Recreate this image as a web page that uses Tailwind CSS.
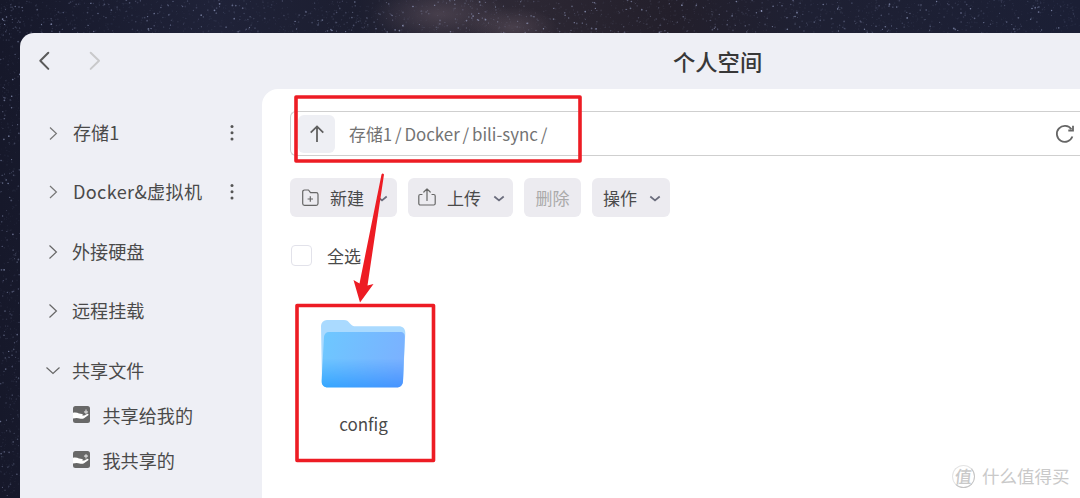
<!DOCTYPE html>
<html lang="zh-CN">
<head>
  <meta charset="UTF-8">
  <title>个人空间</title>
  <script src="https://cdn.jsdelivr.net/npm/@tailwindcss/browser@4"></script>
</head>
<body class="relative h-[498px] w-[1080px] overflow-hidden bg-[#191a2b] pl-5 pt-[33px] font-['Noto_Sans_CJK_SC','Noto_Sans',sans-serif] text-[#4a4a4a]">
  <!-- Wallpaper -->
  <svg class="absolute inset-0" width="1080" height="498">
    <defs>
      <linearGradient id="sky">
        <stop offset="0" stop-color="#16182a" />
        <stop offset=".2" stop-color="#1f2238" />
        <stop offset=".33" stop-color="#1c1e30" />
        <stop offset=".4" stop-color="#2a2735" />
        <stop offset=".48" stop-color="#2d2834" />
        <stop offset=".62" stop-color="#231f2b" />
        <stop offset=".75" stop-color="#1e2033" />
        <stop offset="1" stop-color="#1b1f35" />
      </linearGradient>
      <radialGradient id="nebula">
        <stop offset="0" stop-color="#6b5c68" stop-opacity=".45" />
        <stop offset="1" stop-color="#6b5c68" stop-opacity="0" />
      </radialGradient>
    </defs>
    <rect width="1080" height="498" fill="url(#sky)" />
    <ellipse cx="440" cy="14" rx="70" ry="26" fill="url(#nebula)" />
    <ellipse cx="512" cy="27" rx="45" ry="20" fill="url(#nebula)" />
    <g id="stars"></g>
  </svg>

  <!-- Window -->
  <div class="relative flex h-[465px] flex-col overflow-hidden rounded-tl-[14px] bg-[#eeeff5]">
    <header class="flex h-14 shrink-0 items-center">
      <svg class="ml-[17px] shrink-0" width="66" height="22" fill="none" stroke-width="2" stroke-linecap="round" stroke-linejoin="round">
        <path d="M11.3 2.7 3.3 10.8l8 8.1" stroke="#5a5a5a" />
        <path d="M53.7 2.7l8.3 8.1-8.3 8.1" stroke="#c9c9cb" />
      </svg>
      <h1 class="ml-[570px] text-[22.3px] leading-8 font-medium text-[#383838]">个人空间</h1>
    </header>

    <div class="flex grow">
      <!-- Sidebar -->
      <nav class="w-[242px] shrink-0 pt-[14px] text-[18.1px] leading-[27px]">
        <div class="flex h-[59.5px] items-center pl-[27px]">
          <svg width="14" height="14" fill="none" stroke="#777" stroke-width="1.2"><path d="M3 1.5l6.4 6L3 13.5" /></svg>
          <span class="mb-px ml-3 w-[152px]">存储1</span>
          <svg width="14" height="18" fill="#555"><circle cx="7" cy="2.5" r="1.5" /><circle cx="7" cy="8.7" r="1.5" /><circle cx="7" cy="15" r="1.5" /></svg>
        </div>
        <div class="flex h-[59.5px] items-center pl-[27px]">
          <svg width="14" height="14" fill="none" stroke="#777" stroke-width="1.2"><path d="M3 1l6.4 6L3 13" /></svg>
          <span class="mb-px ml-3 w-[152px] tracking-[.35px]">Docker&amp;虚拟机</span>
          <svg width="14" height="18" fill="#555"><circle cx="7" cy="2.500" r="1.5" /><circle cx="7" cy="8.7" r="1.5" /><circle cx="7" cy="15" r="1.5" /></svg>
        </div>
        <div class="flex h-[59.5px] items-center pl-[27px]">
          <svg width="14" height="14" fill="none" stroke="#666" stroke-width="1.2"><path d="M2.5.5 9.4 7l-6.9 6.5" /></svg>
          <span class="mb-px ml-[11px]">外接硬盘</span>
        </div>
        <div class="flex h-[59.5px] items-center pl-[27px]">
          <svg width="14" height="14" fill="none" stroke="#666" stroke-width="1.2"><path d="M2.5.5 9.4 7l-6.9 6.5" /></svg>
          <span class="mb-px ml-[11px]">远程挂载</span>
        </div>
        <div class="flex h-[52px] items-center pl-[26px] pt-2">
          <svg width="15" height="14" fill="none" stroke="#666" stroke-width="1.2"><path d="M.5 3.500 7 9.500l6.500-6" /></svg>
          <span class="mb-px ml-[11px]">共享文件</span>
        </div>
        <div class="flex h-[45px] items-center pl-[53px]">
          <svg width="17" height="17" class="mb-[3px]">
            <rect width="17" height="17" rx="2.5" fill="#686868" />
            <path d="M0 6.700c2.500-.4 4.500-.1 6 .8l3 .6c1.200.3 1 1.500-.2 1.500l2.400-.1 2.800-1.600c1.200-.5 2 .5 1.200 1.300l-4.200 3c-1.200.7-3 .6-4.500.3L3.700 12 0 12.500z" fill="#fff" />
            <path d="M13 3.500v3.500M11.200 5.600l1.800 1.500 1.800-1.500" fill="none" stroke="#ccc" stroke-width="1.3" />
          </svg>
          <span class="mb-px ml-[12.500px]">共享给我的</span>
        </div>
        <div class="flex h-[45px] items-center pl-[53px]">
          <svg width="17" height="17" class="mb-[3px]">
            <rect width="17" height="17" rx="2.5" fill="#686868" />
            <path d="M0 6.700c2.500-.4 4.500-.1 6 .8l3 .6c1.200.3 1 1.500-.2 1.500l2.400-.1 2.800-1.600c1.200-.5 2 .5 1.200 1.300l-4.200 3c-1.200.7-3 .6-4.500.3L3.700 12 0 12.500z" fill="#fff" />
            <path d="M13 7.500V4M11.200 5.400 13 3.900l1.800 1.500" fill="none" stroke="#ccc" stroke-width="1.3" />
          </svg>
          <span class="mb-px ml-[12.5px]">我共享的</span>
        </div>
      </nav>

      <!-- File area -->
      <main class="grow rounded-tl-[16px] bg-white pl-7 pt-[22px]">
        <div class="flex h-[45px] items-center rounded-l-md border border-r-0 border-[#cfcfcf] pl-[7px]">
          <div class="flex h-[38px] w-[37px] items-center justify-center rounded-md bg-[#eeeff4]">
            <svg width="18" height="20" fill="none" stroke="#606060" stroke-width="1.8"><path d="M9 18V2.5M2.7 8.6 9 2.4l6.3 6.2" /></svg>
          </div>
          <div class="ml-3.5 flex gap-[2.8px] text-[16.9px] leading-6 text-[#737373]">
            <span>存储1</span><span>/</span><span>Docker</span><span>/</span><span>bili-sync</span><span>/</span>
          </div>
          <svg class="ml-auto mr-[5px]" width="20" height="20" fill="none" stroke="#666" stroke-width="1.8">
            <path d="M17.4 12.5A8 8 0 1 1 16.4 5.2" /><path d="M18 1.8v4.7h-4.7" />
          </svg>
        </div>

        <div class="mt-[22px] flex h-[39px] gap-[11px] text-[17px] leading-6">
          <div class="flex w-[107px] items-center rounded-md bg-[#ecebf0] pl-3">
            <svg width="17" height="18" fill="none" stroke="#666" stroke-width="1.2" stroke-linejoin="round">
              <path d="M2.5 1h4l2 2.7h5.7a1.8 1.8 0 0 1 1.8 1.8v9a1.8 1.8 0 0 1-1.8 1.8H2.5A1.8 1.8 0 0 1 .7 14.5V2.8A1.8 1.8 0 0 1 2.5 1zM8.3 7.300v5.400M5.600 10H11" />
            </svg>
            <span class="ml-[11px]">新建</span>
            <svg class="ml-3 mt-0.5" width="12" height="8" fill="none" stroke="#6a6c7c" stroke-width="1.7"><path d="M1.300 1.5 6 5.500l4.700-4" /></svg>
          </div>
          <div class="flex w-[105px] items-center rounded-md bg-[#ecebf0] pl-[10px]">
            <svg class="mb-0.5" width="18" height="18" fill="none" stroke="#666" stroke-width="1.2" stroke-linecap="round" stroke-linejoin="round">
              <path d="M4 6.500H2.300A1.500 1.500 0 0 0 .8 8v7.500A1.500 1.500 0 0 0 2.300 17h13.400a1.500 1.500 0 0 0 1.500-1.500V8a1.500 1.500 0 0 0-1.500-1.500H14M9 12.500V1M5.800 4 9 .9 12.200 4" />
            </svg>
            <span class="ml-[11px]">上传</span>
            <svg class="ml-3 mt-0.5" width="12" height="8" fill="none" stroke="#6a6c7c" stroke-width="1.7"><path d="M1.300 1.500 6 5.500l4.700-4" /></svg>
          </div>
          <div class="flex w-[57px] items-center justify-center rounded-md bg-[#ecebf0] text-[#aaa]">删除</div>
          <div class="flex w-[78px] items-center rounded-md bg-[#ecebf0] pl-[11px]">
            <span>操作</span>
            <svg class="ml-3 mt-0.5" width="12" height="8" fill="none" stroke="#6a6c7c" stroke-width="1.7"><path d="M1.300 1.500 6 5.500l4.700-4" /></svg>
          </div>
        </div>

        <div class="mt-[27px] flex h-6 items-center">
          <span class="mb-0.5 ml-px size-[21px] rounded border border-[#e2e2ea]"></span>
          <span class="ml-[15px] text-[17px] leading-6">全选</span>
        </div>

        <div class="ml-[7px] mt-[50.5px] flex w-[132px] flex-col items-center">
          <svg width="86" height="70" viewBox="0 0 86 70">
            <defs>
              <linearGradient id="front" x1="0" y1="0" x2="1" y2=".2">
                <stop offset="0" stop-color="#6dc8ff" />
                <stop offset="1" stop-color="#7ab2ff" />
              </linearGradient>
              <linearGradient id="shade" x1="0" y1="0" x2="1" y2="0">
                <stop offset="0" stop-color="#35a7ff" />
                <stop offset="1" stop-color="#4792ff" />
              </linearGradient>
              <linearGradient id="fade" x1="0" y1="0" x2="0" y2="1">
                <stop offset=".48" stop-color="#000" />
                <stop offset="1" stop-color="#fff" />
              </linearGradient>
              <mask id="low" maskContentUnits="objectBoundingBox"><rect width="1" height="1" fill="url(#fade)" /></mask>
            </defs>
            <path d="M1 7a6 6 0 0 1 6-6h17c3 0 4 1 5.5 3l2 2c1 1 2 1.2 4 1.2h43c4.5 0 6.8 2.5 6.8 6.8L83 62H2z" fill="#aadaff" />
            <path d="M9 13h71c3.5 0 5 2 4.800 5L83 62c-.2 4-2.500 6.500-6.500 6.500H8c-4 0-6.500-2.500-6.400-6.500L4 18c.2-3 2-5 5-5z" fill="url(#front)" />
            <path d="M9 13h71c3.5 0 5 2 4.800 5L83 62c-.2 4-2.500 6.500-6.500 6.500H8c-4 0-6.500-2.500-6.400-6.500L4 18c.2-3 2-5 5-5z" fill="url(#shade)" mask="url(#low)" />
          </svg>
          <span class="ml-px mt-[23px] text-[17px] leading-6">config</span>
        </div>
      </main>
    </div>
  </div>

  <!-- Annotations -->
  <svg class="absolute inset-0" width="1080" height="498">
    <g fill="none" stroke="#ed1c24" stroke-width="3.6" stroke-linejoin="round">
      <rect x="296" y="97" width="284" height="64" />
      <rect x="297" y="305.5" width="136.5" height="155" />
    </g>
    <path d="M381.500 174.500Q382.500 172.500 384 174.500L367.500 285.500 373.500 284 360 302.500 353.500 280 359.500 283.500z" fill="#ed1c24" />
  </svg>

  <!-- Watermark -->
  <div class="absolute left-[952px] top-[464px] flex items-center text-[#c9c9c9]">
    <span class="flex size-[23px] items-center justify-center rounded-full border border-[#e4e4e4] border-b-[#c4c4c4] border-r-[#c4c4c4] text-[17px] leading-none font-medium"><span class="mb-0.5 -skew-x-6">值</span></span>
    <span class="ml-[7px] text-[17.5px] leading-6">什么值得买</span>
  </div>

  <script>
    // Seeded stars so the sky is the same on every load
    let seed = 7;
    function rand() {
      seed = (seed * 16807) % 2147483647;
      return seed / 2147483647;
    }

    function addStars(count, width, height) {
      let html = '';
      for (let i = 0; i < count; i++) {
        const x = (rand() * width).toFixed(1);
        const y = (rand() * height).toFixed(1);
        const r = (0.4 + rand() * 0.5).toFixed(2);
        const o = (0.06 + Math.pow(rand(), 5) * 0.6).toFixed(2);
        html += `<circle cx="${x}" cy="${y}" r="${r}" fill="#aab4dc" opacity="${o}" />`;
      }
      return html;
    }

    document.getElementById('stars').innerHTML = addStars(2200, 1080, 33) + addStars(600, 20, 498);
  </script>
</body>
</html>
